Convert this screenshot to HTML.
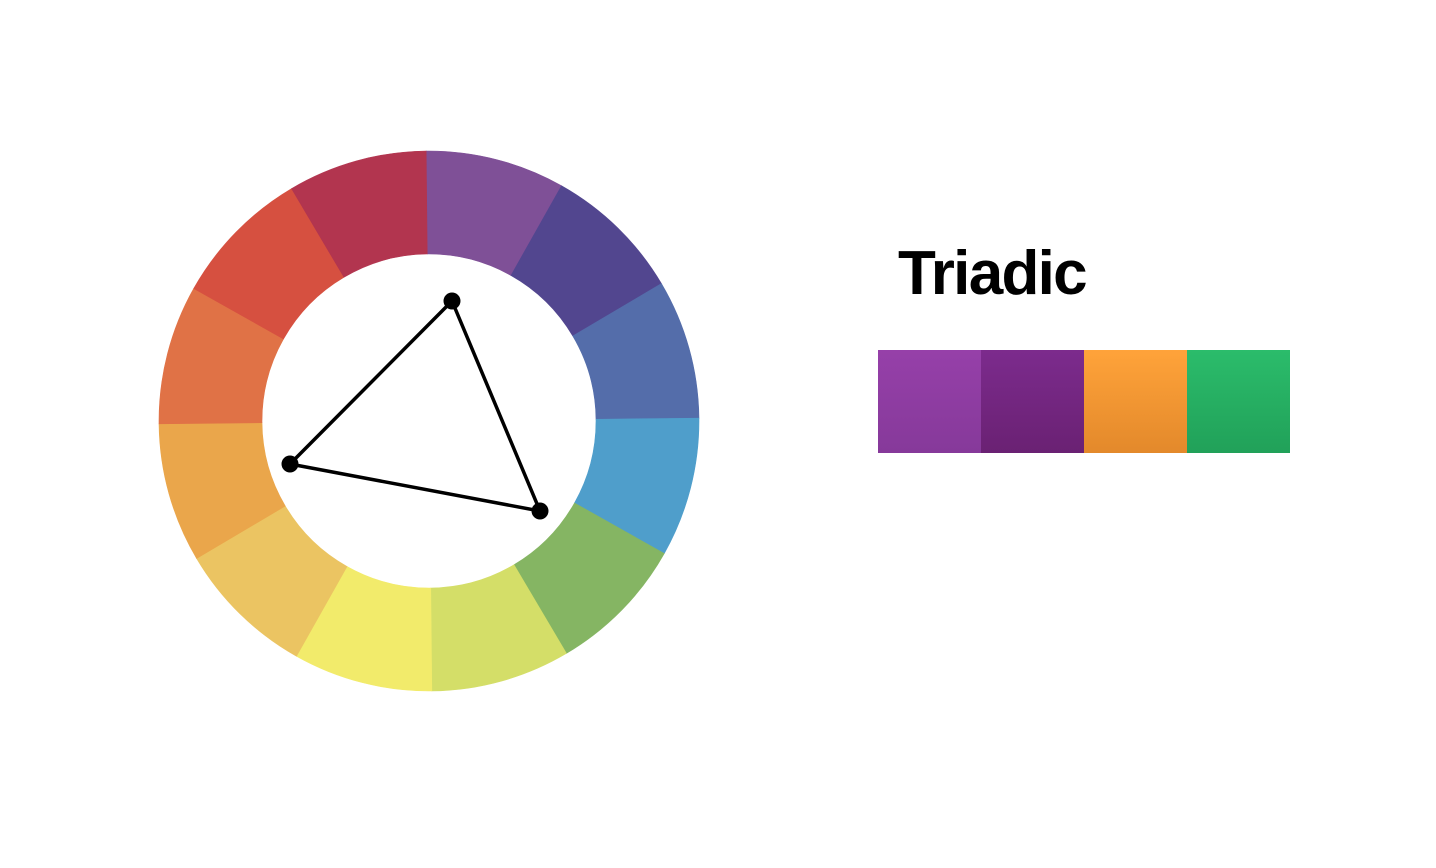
<!DOCTYPE html>
<html><head><meta charset="utf-8"><style>
html,body{margin:0;padding:0;background:#fff;width:1436px;height:868px;overflow:hidden;position:relative}
.t{position:absolute;left:898px;top:238px;font:bold 62px "Liberation Sans",sans-serif;color:#000;letter-spacing:-1.7px}
.s{position:absolute;top:350px;height:103px;width:103px}
</style></head><body>
<svg width="1436" height="868" style="position:absolute;left:0;top:0">
<defs><path id="seg" d="M0,-270 A270,270 0 0 1 135,-233.83 L83.5,-144.63 A167,167 0 0 0 0,-167 Z"/></defs>
<g transform="translate(429,421) rotate(-0.6)">
<use href="#seg" fill="#7F5097" stroke="#7F5097" stroke-width="0.6" transform="rotate(0)"/>
<use href="#seg" fill="#52468F" stroke="#52468F" stroke-width="0.6" transform="rotate(30)"/>
<use href="#seg" fill="#546DAA" stroke="#546DAA" stroke-width="0.6" transform="rotate(60)"/>
<use href="#seg" fill="#4F9ECB" stroke="#4F9ECB" stroke-width="0.6" transform="rotate(90)"/>
<use href="#seg" fill="#85B563" stroke="#85B563" stroke-width="0.6" transform="rotate(120)"/>
<use href="#seg" fill="#D4DE68" stroke="#D4DE68" stroke-width="0.6" transform="rotate(150)"/>
<use href="#seg" fill="#F2EB6B" stroke="#F2EB6B" stroke-width="0.6" transform="rotate(180)"/>
<use href="#seg" fill="#EBC462" stroke="#EBC462" stroke-width="0.6" transform="rotate(210)"/>
<use href="#seg" fill="#EAA64B" stroke="#EAA64B" stroke-width="0.6" transform="rotate(240)"/>
<use href="#seg" fill="#E07246" stroke="#E07246" stroke-width="0.6" transform="rotate(270)"/>
<use href="#seg" fill="#D65040" stroke="#D65040" stroke-width="0.6" transform="rotate(300)"/>
<use href="#seg" fill="#B2354F" stroke="#B2354F" stroke-width="0.6" transform="rotate(330)"/>
</g>
<polygon points="452,301 290,464 540,511" fill="none" stroke="#000" stroke-width="3.5" stroke-linejoin="round"/>
<circle cx="452" cy="301" r="8.5" fill="#000"/>
<circle cx="290" cy="464" r="8.5" fill="#000"/>
<circle cx="540" cy="511" r="8.5" fill="#000"/>
</svg>
<div class="t">Triadic</div>
<div class="s" style="left:878px;background:linear-gradient(#9640A9,#86399A)"></div>
<div class="s" style="left:981px;background:linear-gradient(#7C2B8D,#6A2173)"></div>
<div class="s" style="left:1084px;background:linear-gradient(#FFA33A,#E3892B)"></div>
<div class="s" style="left:1187px;width:103px;background:linear-gradient(#2BBC6B,#21A159)"></div>
</body></html>
